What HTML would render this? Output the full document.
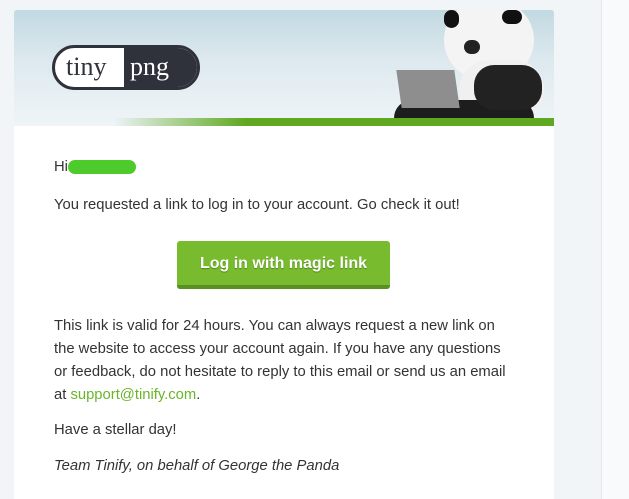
<!DOCTYPE html>
<html><head><style>
body{margin:0;width:629px;height:499px;background:#f1f5f8;font-family:"Liberation Sans",Arial,sans-serif;overflow:hidden;position:relative}
.side{position:absolute;left:601px;top:0;width:28px;height:499px;background:#f9fafb;border-left:1px solid #e3e8ec}
.card{position:absolute;left:14px;top:10px;width:540px;height:489px;background:#fff;border-radius:3px 3px 0 0;overflow:hidden}
.hdr{position:absolute;left:0;top:0;width:540px;height:116px;background:linear-gradient(180deg,#c2d9e1 0%,#dbe8ee 40%,#e8f0f4 75%,#eef4f7 100%)}
.logo{position:absolute;left:38px;top:35px;width:148px;height:45px;border:3px solid #2f323b;border-radius:25px;background:#fff;overflow:hidden;box-sizing:border-box}
.logo .r{position:absolute;left:69px;top:0;width:80px;height:45px;background:#2f323b}
.logo span{position:absolute;top:4px;font-family:"Liberation Serif",serif;font-size:26px}
.t{position:absolute;left:54px;color:#333;font-size:14.8px;line-height:23px}
a{color:#6ab42a;text-decoration:none}
</style></head><body>
<div class="side"></div>
<div class="card">
<div class="hdr">
<div class="logo"><div class="r"></div><span style="left:11px;color:#2f323b">tiny</span><span style="left:75px;color:#fff">png</span></div>
<div style="position:absolute;left:430px;top:-10px;width:90px;height:80px;background:#f4f4f4;border-radius:40px"></div>
<div style="position:absolute;left:445px;top:50px;width:85px;height:60px;background:#f0f0f0;border-radius:30px"></div>
<div style="position:absolute;left:430px;top:0;width:15px;height:18px;background:#111;border-radius:8px"></div>
<div style="position:absolute;left:488px;top:0;width:20px;height:14px;background:#111;border-radius:8px"></div>
<div style="position:absolute;left:450px;top:30px;width:16px;height:14px;background:#222;border-radius:8px"></div>
<div style="position:absolute;left:380px;top:90px;width:140px;height:26px;background:#1d1d1d;border-radius:18px 18px 0 0"></div>
<div style="position:absolute;left:460px;top:55px;width:68px;height:45px;background:#222;border-radius:20px"></div>
<div style="position:absolute;left:385px;top:60px;width:58px;height:38px;background:#8e8e8e;transform:skewX(8deg)"></div>
<div style="position:absolute;left:100px;top:108px;width:440px;height:8px;background:linear-gradient(90deg,rgba(100,170,30,0),#5fa820 30%,#5fa820)"></div>
</div>
</div>
<div class="t" style="top:156px">Hi <span style="display:inline-block;width:68px;height:14px;background:#4ecb2c;border-radius:8px;vertical-align:-3px;margin-left:-4px"></span></div>
<div class="t" style="top:194px">You requested a link to log in to your account. Go check it out!</div>
<div style="position:absolute;left:177px;top:241px;width:213px;height:44px;background:#78bb2f;border-bottom:4px solid #5a8f22;border-radius:3px;color:#fff;font-weight:bold;font-size:16px;text-align:center;line-height:46px;text-shadow:0 1px 1px rgba(0,0,0,.3)">Log in with magic link</div>
<div class="t" style="top:315px">This link is valid for 24 hours. You can always request a new link on<br>the website to access your account again. If you have any questions<br>or feedback, do not hesitate to reply to this email or send us an email<br>at <a>support@tinify.com</a>.</div>
<div class="t" style="top:419px">Have a stellar day!</div>
<div class="t" style="top:455px;font-style:italic">Team Tinify, on behalf of George the Panda</div>
</body></html>
